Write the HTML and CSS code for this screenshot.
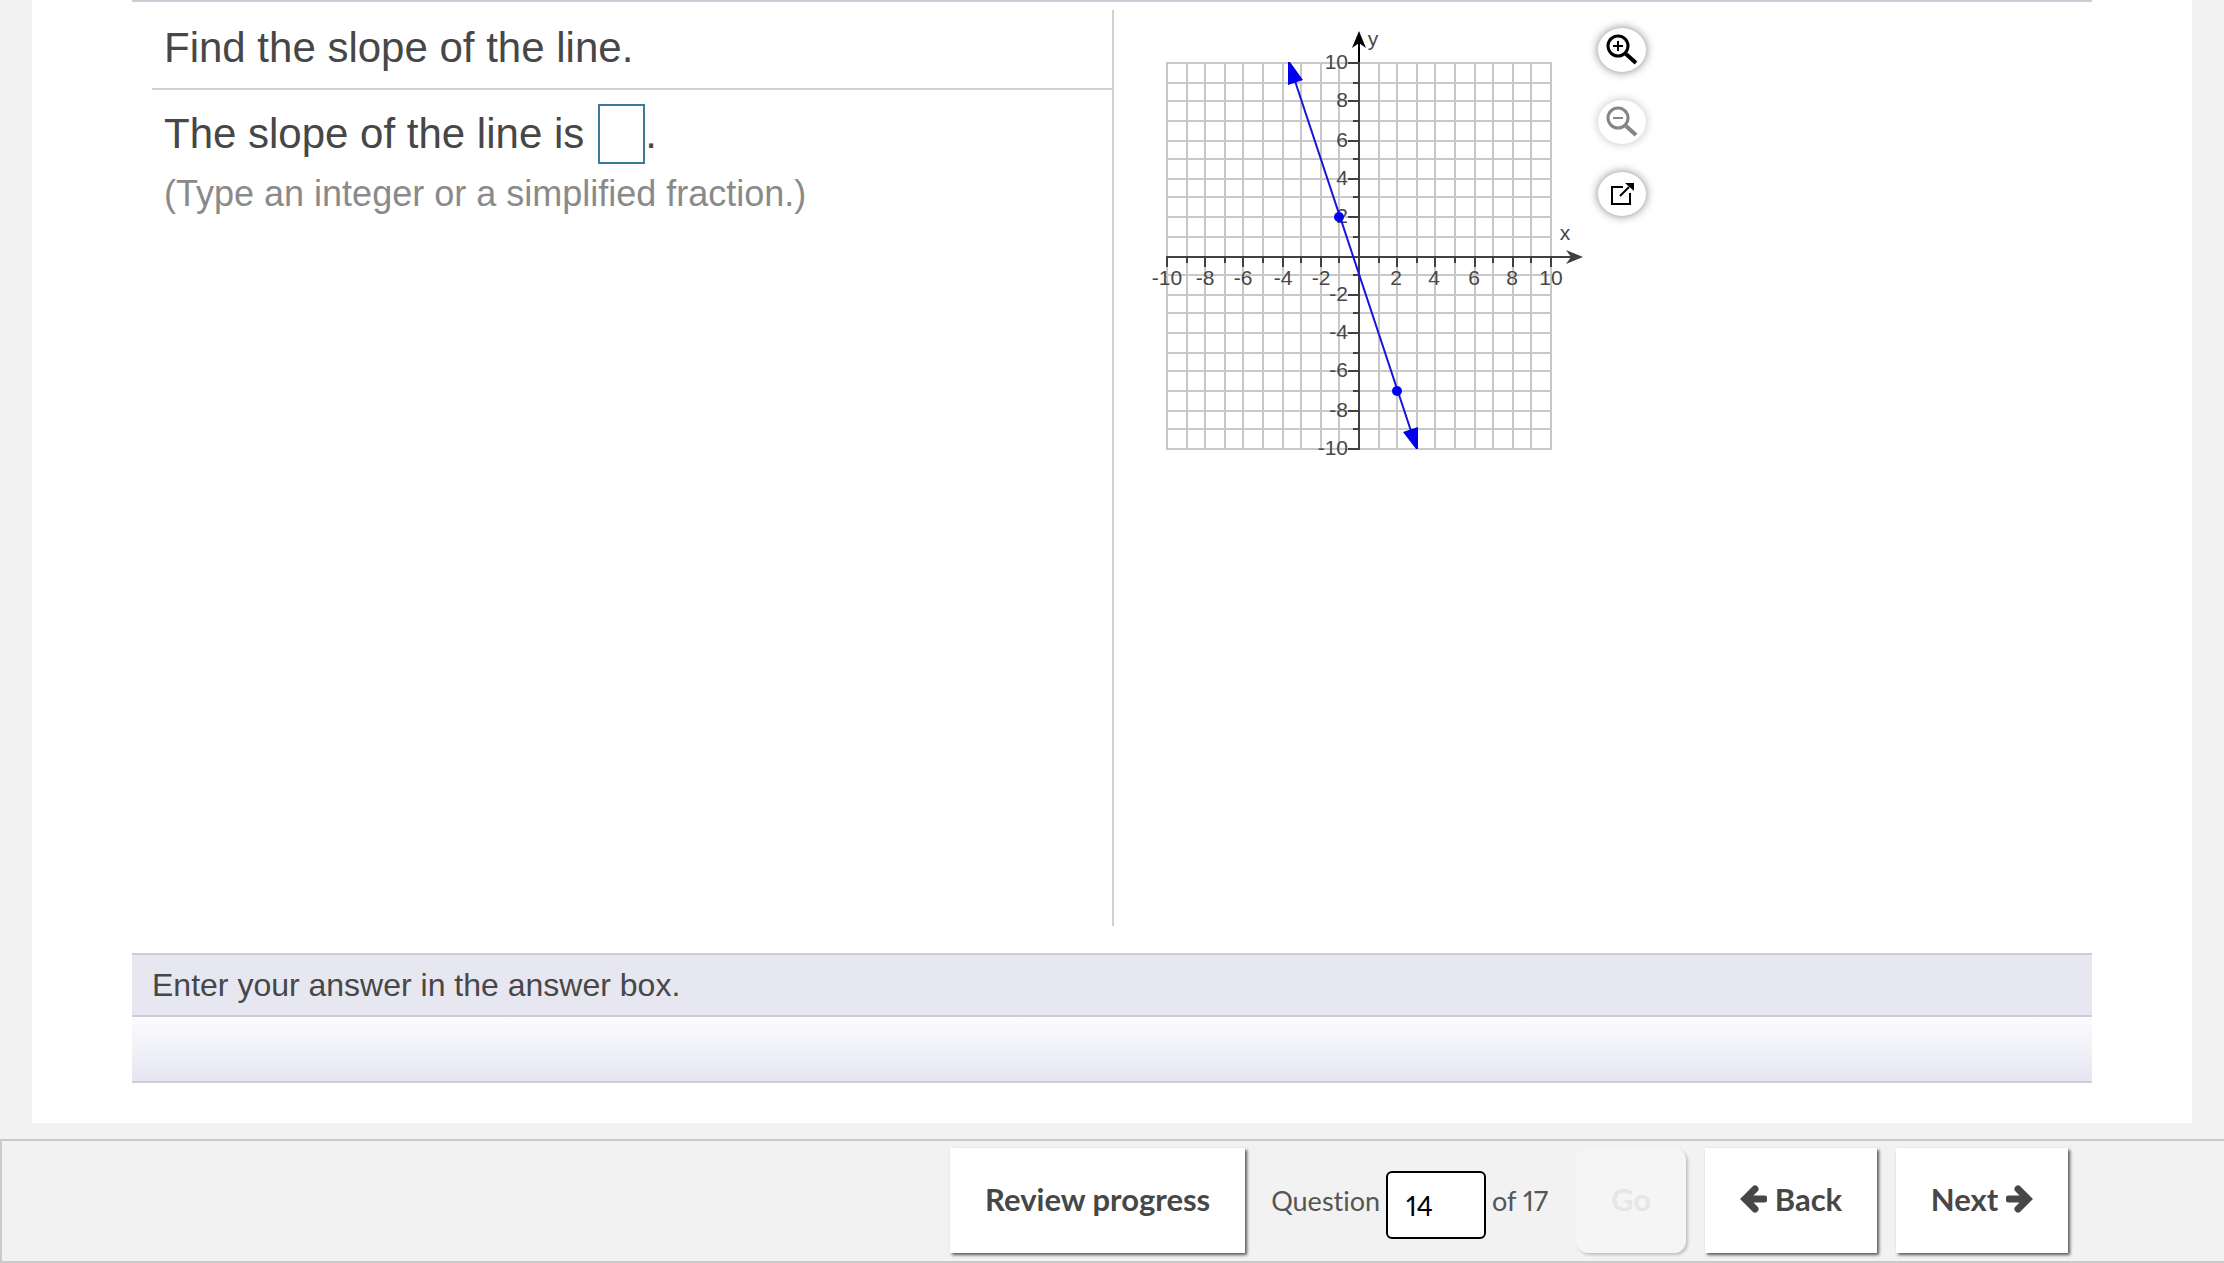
FILE: index.html
```html
<!DOCTYPE html>
<html lang="en">
<head>
<meta charset="utf-8">
<meta name="viewport" content="width=device-width, initial-scale=1">
<title>Find the slope of the line</title>
<link rel="stylesheet" href="styles.css">
</head>
<body>
<main class="panel">
  <div class="workspace">
    <section class="question">
      <h1 class="prompt">Find the slope of the line.</h1>
      <div class="answer">
        <div class="answer-row">
          <label for="slope">The slope of the line is</label>
          <input class="answer-box" id="slope" type="text" autocomplete="off">
          <span>.</span>
        </div>
        <p class="hint">(Type an integer or a simplified fraction.)</p>
      </div>
    </section>
    <section class="figure" aria-label="Graph">
      <svg class="graph" viewBox="1144 20 444 440" role="img" aria-label="Line through (-1, 2) and (2, -7)">
        <path class="grid" d="M1167 62V450M1187 62V450M1205 62V450M1225 62V450M1243 62V450M1263 62V450M1283 62V450M1301 62V450M1321 62V450M1339 62V450M1379 62V450M1397 62V450M1417 62V450M1435 62V450M1455 62V450M1475 62V450M1493 62V450M1513 62V450M1531 62V450M1551 62V450M1166 63H1552M1166 83H1552M1166 101H1552M1166 121H1552M1166 141H1552M1166 159H1552M1166 179H1552M1166 197H1552M1166 217H1552M1166 237H1552M1166 275H1552M1166 295H1552M1166 313H1552M1166 333H1552M1166 353H1552M1166 371H1552M1166 391H1552M1166 411H1552M1166 429H1552M1166 449H1552"/>
        <path class="axis" d="M1359 62V450M1166 257H1572"/>
        <path class="axis" d="M1348 63H1359M1348 101H1359M1348 141H1359M1348 179H1359M1348 217H1359M1348 295H1359M1348 333H1359M1348 371H1359M1348 411H1359M1348 449H1359M1353 83H1359M1353 121H1359M1353 159H1359M1353 197H1359M1353 237H1359M1353 275H1359M1353 313H1359M1353 353H1359M1353 391H1359M1353 429H1359"/>
        <path class="axis" d="M1167 257V267M1205 257V267M1243 257V267M1283 257V267M1321 257V267M1397 257V267M1435 257V267M1475 257V267M1513 257V267M1551 257V267M1187 257V263M1225 257V263M1263 257V263M1301 257V263M1339 257V263M1379 257V263M1417 257V263M1455 257V263M1493 257V263M1531 257V263"/>
        <path class="axis-top" d="M1359 62V42"/>
        <path d="M1359 31L1366 48L1359 43L1352 48Z" fill="#000"/>
        <path d="M1583 257L1566 264L1571 257L1566 250Z" fill="#404040"/>
        <g class="tick-labels tick-labels-y">
          <text x="1348" y="69">10</text><text x="1348" y="107">8</text><text x="1348" y="147">6</text><text x="1348" y="185">4</text><text x="1348" y="223">2</text><text x="1348" y="301">-2</text><text x="1348" y="339">-4</text><text x="1348" y="377">-6</text><text x="1348" y="417">-8</text><text x="1348" y="455">-10</text>
        </g>
        <g class="tick-labels">
          <text x="1167" y="285">-10</text><text x="1205" y="285">-8</text><text x="1243" y="285">-6</text><text x="1283" y="285">-4</text><text x="1321" y="285">-2</text><text x="1396" y="285">2</text><text x="1434" y="285">4</text><text x="1474" y="285">6</text><text x="1512" y="285">8</text><text x="1551" y="285">10</text>
          <text x="1373" y="46">y</text><text x="1565" y="240">x</text>
        </g>
        <path class="line" d="M1293 75L1413 437"/>
        <path class="mark" d="M1288 62H1290L1303 80L1288 85ZM1416 449H1418V427L1403 432Z"/>
        <circle class="mark" cx="1339" cy="217" r="5"/>
        <circle class="mark" cx="1397" cy="391" r="5"/>
      </svg>
      <div class="tools">
        <button class="tool" type="button" aria-label="Zoom in">
          <svg viewBox="0 0 48 44"><circle cx="20" cy="18" r="10" fill="none" stroke="#000" stroke-width="3"/><path d="M15 18H25M20 13V23" stroke="#000" stroke-width="2"/><path d="M28 26L38 35" stroke="#000" stroke-width="4"/></svg>
        </button>
        <button class="tool tool-disabled" type="button" aria-label="Zoom out" disabled>
          <svg viewBox="0 0 48 44"><circle cx="20" cy="18" r="10" fill="none" stroke="#858585" stroke-width="3"/><path d="M15 18H25" stroke="#858585" stroke-width="2"/><path d="M28 26L38 35" stroke="#858585" stroke-width="4"/></svg>
        </button>
        <button class="tool" type="button" aria-label="Open in a new window">
          <svg viewBox="0 0 48 44"><path d="M25 15H14V32H32V21" fill="none" stroke="#000" stroke-width="2"/><path d="M22 24L31 15" stroke="#000" stroke-width="2"/><path d="M27 11H36V19Z" fill="#000"/></svg>
        </button>
      </div>
    </section>
  </div>
  <p class="status">Enter your answer in the answer box.</p>
  <div class="status-bar"></div>
</main>
<footer class="footer">
  <button class="nav-button review" type="button">Review progress</button>
  <form class="jump">
    <label for="number">Question</label>
    <input class="number" id="number" type="text" value="14">
    <span>of 17</span>
  </form>
  <button class="nav-button go" type="button" disabled>Go</button>
  <button class="nav-button step" type="button">
    <svg class="arrow" viewBox="0 0 27 28"><path d="M15 4L5 14L15 24M6 14H24" /></svg>
    Back
  </button>
  <button class="nav-button step" type="button">
    Next
    <svg class="arrow" viewBox="0 0 27 28"><path d="M12 4L22 14L12 24M3 14H21" /></svg>
  </button>
</footer>
</body>
</html>
```
FILE: styles.css
```css
* {
  box-sizing: border-box;
}

body {
  display: flex;
  flex-direction: column;
  min-height: 100vh;
  margin: 0;
  background: #f2f2f2;
  color: #474747;
  font-family: "Liberation Sans", Arial, sans-serif;
}

button,
input {
  font: inherit;
}

.panel {
  display: flex;
  flex: 1;
  flex-direction: column;
  margin: 0 32px 16px;
  padding: 0 100px 40px;
  background: #fff;
}

.workspace {
  display: grid;
  flex: 1;
  grid-template-columns: 1fr 1fr;
  padding: 8px 0 27px;
  border-top: 2px solid #cdcdd9;
}

.question {
  padding-left: 20px;
}

.prompt {
  margin: 0;
  padding: 14px 12px 16px;
  border-bottom: 2px solid #d0d0d0;
  font-size: 42px;
  font-weight: 400;
  line-height: 48px;
}

.answer {
  padding: 14px 12px;
}

.answer-row {
  display: flex;
  align-items: center;
  font-size: 42px;
  line-height: 48px;
}

.answer-box {
  width: 47px;
  height: 60px;
  margin-left: 14px;
  padding: 0 4px;
  border: 2px solid #3b7a9b;
  background: #fff;
}

.hint {
  margin: 10px 0 0;
  color: #8a8a8a;
  font-size: 36px;
  line-height: 40px;
}

.figure {
  display: flex;
  align-items: flex-start;
  gap: 10px;
  padding: 10px 0 0 30px;
  border-left: 2px solid #d0d0d0;
}

.graph {
  width: 444px;
  height: 440px;
}

.grid {
  stroke: #c8c8c8;
  stroke-width: 2;
}

.axis {
  stroke: #404040;
  stroke-width: 2;
}

.axis-top {
  stroke: #000;
  stroke-width: 2;
}

.tick-labels {
  fill: #474747;
  font-size: 21px;
  text-anchor: middle;
}

.tick-labels-y {
  text-anchor: end;
}

.line {
  stroke: #1414dc;
  stroke-width: 2;
}

.mark {
  fill: #00e;
}

.tools {
  display: flex;
  flex-direction: column;
  gap: 28px;
  padding-top: 8px;
}

.tool {
  width: 48px;
  height: 44px;
  padding: 0;
  border: 0;
  border-radius: 50%;
  background: #fff;
  box-shadow: 0 0 10px rgba(0, 0, 0, 0.5);
}

.tool svg {
  display: block;
}

.tool-disabled {
  box-shadow: 0 0 10px rgba(0, 0, 0, 0.25);
}

.status {
  margin: 0;
  padding: 10px 20px;
  border: solid #cdcdd9;
  border-width: 2px 0;
  background: #e7e7f1;
  font-size: 32px;
  line-height: 40px;
}

.status-bar {
  height: 66px;
  border-bottom: 2px solid #cdcdd9;
  background: linear-gradient(#fcfcff, #e5e6f1);
}

.footer {
  display: flex;
  align-items: center;
  justify-content: flex-end;
  padding: 7px 156px 8px 0;
  border: solid #c8cbca;
  border-width: 2px 0 2px 2px;
  font-family: Lato, sans-serif;
  font-variant-ligatures: none;
  font-variant-numeric: proportional-nums;
}

.nav-button {
  display: flex;
  align-items: center;
  justify-content: center;
  height: 105px;
  padding: 0 0 4px;
  border: 0;
  background: #fff;
  box-shadow: 2px 2px 3px rgba(0, 0, 0, 0.65);
  color: #474747;
  font-size: 31px;
  font-weight: 700;
  line-height: 36px;
}

.review {
  width: 295px;
}

.jump {
  display: flex;
  align-items: center;
  gap: 6px;
  margin: 0 28px 0 26px;
  color: #555;
  font-size: 27px;
  line-height: 32px;
}

.number {
  width: 100px;
  height: 68px;
  margin-top: 9px;
  padding: 0 18px;
  border: 2px solid #000;
  border-radius: 6px;
  background: #fff;
  color: #000;
}

.go {
  width: 110px;
  border-radius: 12px;
  background: #f5f5f5;
  box-shadow: 2px 2px 3px rgba(0, 0, 0, 0.2);
  color: #e6e6e6;
}

.step {
  gap: 8px;
  width: 172px;
  margin-left: 19px;
}

.arrow {
  width: 27px;
  height: 28px;
  fill: none;
  stroke: #474747;
  stroke-linecap: round;
  stroke-linejoin: miter;
  stroke-width: 7;
}
```
